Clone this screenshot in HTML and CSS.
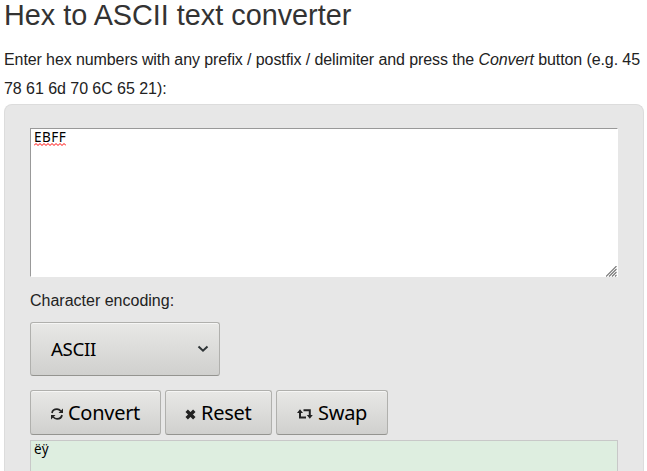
FILE: index.html
```
<!DOCTYPE html>
<html lang="en">
<head>
<meta charset="utf-8">
<title>Hex to ASCII text converter</title>
<link rel="stylesheet" href="styles.css">
</head>
<body>
<h1>Hex to ASCII text converter</h1>
<p class="intro"><span class="lead">Enter hex numbers with any prefix / postfix / delimiter and press the <i>Convert</i> button (e.g. 45</span><br>78 61 6d 70 6C 65 21):</p>
<main class="panel">
  <div class="input"><span class="hex">EBFF<svg class="wave" width="32" height="3" viewBox="0 0 32 3"><path d="M0 2.5L2 .5L4 2.5L6 .5L8 2.5L10 .5L12 2.5L14 .5L16 2.5L18 .5L20 2.5L22 .5L24 2.5L26 .5L28 2.5L30 .5L32 2.5" fill="none" stroke="#f00" stroke-width="1"/></svg></span>
    <svg class="grip" width="11" height="11" viewBox="0 0 11 11"><path d="M0 10.5L10.5 0M3 10.5L10.5 3M6 10.5L10.5 6M9 10.5L10.5 9" fill="none" stroke="#777" stroke-width="1.1"/></svg>
  </div>
  <div class="label">Character encoding:</div>
  <div class="select"><span>ASCII</span><svg width="12" height="8" viewBox="0 0 12 8"><path d="M1.5 1.5L6 5.7L10.5 1.5" fill="none" stroke="#2e3436" stroke-width="2"/></svg></div>
  <div class="buttons">
    <button class="btn convert"><svg width="12" height="12" viewBox="0 0 12 12"><path d="M1 5Q1.6 1.2 6 1.2Q8.2 1.2 9.8 3M11 7Q10.4 10.8 6 10.8Q3.8 10.8 2.2 9" fill="none" stroke="#222" stroke-width="1.7"/><path d="M12 .5V5H7.5ZM0 11.5V7H4.5Z" fill="#222"/></svg><span>Convert</span></button>
    <button class="btn reset"><svg width="11" height="11" viewBox="0 0 11 11"><path d="M1.7 1.7L9.3 9.3M9.3 1.7L1.7 9.3" fill="none" stroke="#222" stroke-width="3.4"/></svg><span>Reset</span></button>
    <button class="btn swap"><svg width="16" height="10" viewBox="0 0 16 10"><path d="M3 3V8.5H9M6.5 1.2H12.8V6.5" fill="none" stroke="#222" stroke-width="2"/><path d="M0 4L3 .3L6 4ZM9.8 6L12.8 9.7L15.8 6Z" fill="#222"/></svg><span>Swap</span></button>
  </div>
  <div class="output">ëÿ</div>
</main>
</body>
</html>
```
FILE: styles.css
```
* { box-sizing: border-box; }
html { overflow: hidden; }
body {
  margin: 0;
  padding: 0 3px 0 4px;
  height: 471px;
  overflow: hidden;
  background: #fff;
  color: #222;
  font: 16px/29px "Liberation Sans", Arial, sans-serif;
}
h1 {
  margin: 0;
  height: 45px;
  color: #333;
  font-size: 28.8px;
  font-weight: 400;
  line-height: 31px;
  white-space: nowrap;
}
.intro { margin: 0; height: 59px; letter-spacing: -0.05px; white-space: nowrap; }
.lead { letter-spacing: -0.095px; }
.panel {
  height: 367px;
  padding: 23px 25px 0;
  overflow: hidden;
  border: 1px solid #dcdcdc;
  border-bottom: 0;
  border-radius: 8px 8px 0 0;
  background: #e7e7e7;
}
.input {
  position: relative;
  height: 149px;
  padding: 0 3px;
  border: 1px solid;
  border-color: #999 #fff #fff #999;
  background: #fff;
}
.input, .output {
  color: #000;
  font: 13.5px/16px "Noto Sans", sans-serif;
  letter-spacing: 0.45px;
}
.hex { position: relative; display: inline-block; }
.wave { position: absolute; left: 0; top: 14px; }
.grip { position: absolute; right: 0; bottom: -1px; }
.label { height: 45px; padding-top: 9px; }
.select {
  display: flex;
  align-items: center;
  justify-content: space-between;
  width: 190px;
  height: 54px;
  padding: 0 10px 0 20px;
  font: 18.667px/26px "Noto Sans", sans-serif;
  letter-spacing: -0.3px;
}
.select, .btn {
  border: 1px solid #b0b0ad;
  border-bottom-color: #949490;
  border-radius: 3px;
  background: linear-gradient(#e8e8e6, #d0d0ce);
  box-shadow: inset 0 1px #f6f6f5;
  color: #000;
}
.buttons { display: flex; gap: 4px; margin-top: 14px; }
.btn {
  display: flex;
  align-items: center;
  gap: 5px;
  height: 45px;
  padding: 0 0 0 20px;
  font: 20px/27px "Noto Sans", sans-serif;
  letter-spacing: -0.28px;
  white-space: nowrap;
}
.btn svg { flex: none; margin-top: 3px; }
.convert { width: 131px; }
.reset { width: 107px; padding-left: 19px; }
.swap { width: 112px; }
.output {
  height: 31px;
  margin-top: 5px;
  padding: 0 3px;
  border: 1px solid #c8c8c8;
  border-bottom: 0;
  background: #deeee0;
}
```
